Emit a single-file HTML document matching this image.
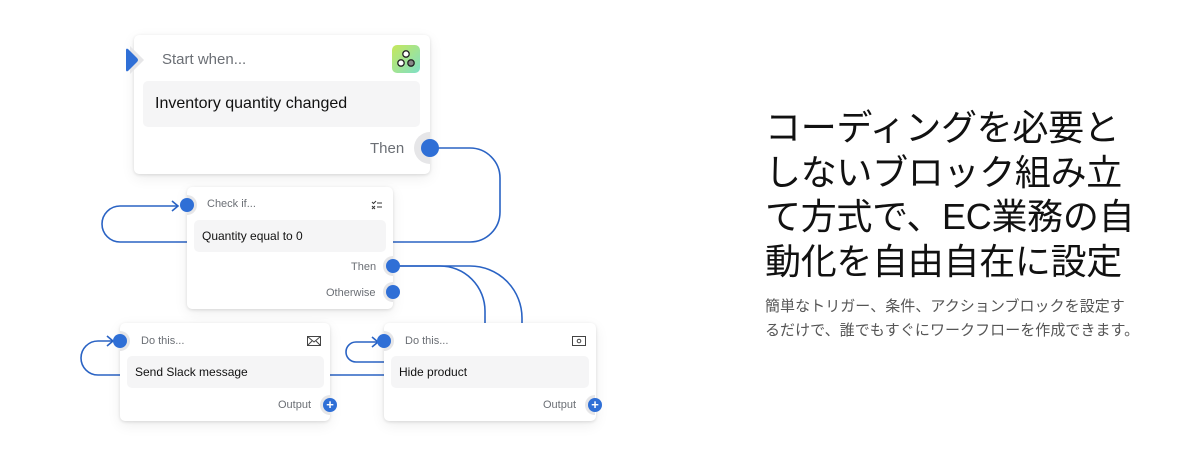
<!DOCTYPE html>
<html><head><meta charset="utf-8"><style>
html,body{margin:0;padding:0;background:#fff;width:1200px;height:474px;overflow:hidden;position:relative;font-family:"Liberation Sans","Noto Sans CJK JP",sans-serif;}
.card{position:absolute;background:#fff;border-radius:5px;box-shadow:0 1px 3px rgba(0,0,0,.12),0 4px 14px rgba(0,0,0,.07);}
.inner{position:absolute;background:#f5f5f6;border-radius:5px;color:#111;}
.lbl{position:absolute;color:#6b6f75;}
.dot{position:absolute;border-radius:50%;background:#2f6fd6;}
.ring{position:absolute;border-radius:50%;background:#e6e6e8;}
h1{position:absolute;left:765px;top:106px;margin:0;font-weight:400;font-size:36px;line-height:44.5px;color:#111;letter-spacing:-0.3px;font-family:"Liberation Sans","Noto Sans CJK JP",sans-serif;white-space:nowrap}
p{position:absolute;left:765px;top:295px;margin:0;font-size:15px;line-height:24px;color:#555;letter-spacing:0.05px;white-space:nowrap}
</style></head><body>
<svg width="1200" height="474" style="position:absolute;left:0;top:0" fill="none" stroke="#2a63c4" stroke-width="1.6">
<path d="M430 148 H470 A30 30 0 0 1 500 178 V212 A30 30 0 0 1 470 242 H393"/>
<path d="M187 242 H120 A18 18 0 0 1 120 206 H178"/><path d="M172 201 L178 206 L172 211"/>
<path d="M393 266 H440 A45 45 0 0 1 485 311 V323"/>
<path d="M393 266 H470 A52 52 0 0 1 522 318 V323"/>
<path d="M120 375 H98 A17 17 0 0 1 98 341 H113"/><path d="M107 336 L113 341 L107 346"/>
<path d="M330 375 H384"/>
<path d="M384 362 H356 A10 10 0 0 1 356 342 H378"/><path d="M372 337 L378 342 L372 347"/>
</svg>
<!-- card1 -->
<div class="card" style="left:134px;top:35px;width:296px;height:139px"></div>
<svg width="24" height="30" style="position:absolute;left:124px;top:45px"><path d="M6 1 L20 15 L6 29 Z" fill="#e6e6e8"/><path d="M2 5 Q2 3 4 4 L13 13 Q15 15 13 17 L4 26 Q2 27 2 25 Z" fill="#2f6fd6"/></svg>
<div class="lbl" style="left:162px;top:51px;font-size:15px">Start when...</div>
<div style="position:absolute;left:392px;top:45px;width:28px;height:28px;border-radius:5px;background:linear-gradient(135deg,#c6e85a,#7fe0c8)"></div>
<svg width="28" height="28" style="position:absolute;left:392px;top:45px" fill="#fff" stroke="#222" stroke-width="1.3"><circle cx="14" cy="9" r="3.2"/><circle cx="9" cy="18" r="3.2"/><circle cx="19" cy="18" r="3.2" fill="#888"/></svg>
<div class="inner" style="left:143px;top:81px;width:277px;height:46px"><span style="position:absolute;left:12px;top:14px;font-size:16px">Inventory quantity changed</span></div>
<div class="lbl" style="left:370px;top:140px;font-size:15px">Then</div>
<div class="ring" style="left:414px;top:132px;width:32px;height:32px;clip-path:inset(0 50% 0 0)"></div>
<div class="dot" style="left:421px;top:139px;width:18px;height:18px"></div>
<!-- card2 -->
<div class="card" style="left:187px;top:187px;width:206px;height:122px"></div>
<div class="ring" style="left:177px;top:195px;width:20px;height:20px;clip-path:inset(0 0 0 50%)"></div>
<div class="dot" style="left:180px;top:198px;width:14px;height:14px"></div>
<div class="lbl" style="left:207px;top:198px;font-size:11px">Check if...</div>
<svg width="12" height="10" style="position:absolute;left:371px;top:200px" fill="none" stroke="#333" stroke-width="1"><path d="M1 2 L2.5 3.5 L5 1 M1 6 L4 9 M4 6 L1 9 M6 3 H11 M6 7 H11"/></svg>
<div class="inner" style="left:194px;top:220px;width:192px;height:32px"><span style="position:absolute;left:8px;top:9px;font-size:12px">Quantity equal to 0</span></div>
<div class="lbl" style="left:351px;top:261px;font-size:11px">Then</div>
<div class="ring" style="left:383px;top:256px;width:20px;height:20px;clip-path:inset(0 50% 0 0)"></div>
<div class="dot" style="left:386px;top:259px;width:14px;height:14px"></div>
<div class="lbl" style="left:326px;top:287px;font-size:11px">Otherwise</div>
<div class="ring" style="left:383px;top:282px;width:20px;height:20px;clip-path:inset(0 50% 0 0)"></div>
<div class="dot" style="left:386px;top:285px;width:14px;height:14px"></div>
<!-- card3 -->
<div class="card" style="left:120px;top:323px;width:210px;height:98px"></div>
<div class="ring" style="left:110px;top:331px;width:20px;height:20px;clip-path:inset(0 0 0 50%)"></div>
<div class="dot" style="left:113px;top:334px;width:14px;height:14px"></div>
<div class="lbl" style="left:141px;top:335px;font-size:11px">Do this...</div>
<svg width="14" height="10" style="position:absolute;left:307px;top:336px" fill="none" stroke="#444" stroke-width="1"><rect x=".5" y=".5" width="13" height="9"/><path d="M.5 .5 L7 6 L13.5 .5 M.5 9.5 L5 5 M13.5 9.5 L9 5"/></svg>
<div class="inner" style="left:127px;top:356px;width:197px;height:32px"><span style="position:absolute;left:8px;top:9px;font-size:12px">Send Slack message</span></div>
<div class="lbl" style="left:278px;top:399px;font-size:11px">Output</div>
<div class="ring" style="left:320px;top:395px;width:20px;height:20px;clip-path:inset(0 50% 0 0)"></div>
<div class="dot" style="left:323px;top:398px;width:14px;height:14px;color:#fff;font-size:13px;line-height:14px;text-align:center;font-weight:bold">+</div>
<!-- card4 -->
<div class="card" style="left:384px;top:323px;width:212px;height:98px"></div>
<div class="ring" style="left:374px;top:331px;width:20px;height:20px;clip-path:inset(0 0 0 50%)"></div>
<div class="dot" style="left:377px;top:334px;width:14px;height:14px"></div>
<div class="lbl" style="left:405px;top:335px;font-size:11px">Do this...</div>
<svg width="14" height="10" style="position:absolute;left:572px;top:336px" fill="none" stroke="#444" stroke-width="1"><rect x=".5" y=".5" width="13" height="9"/><circle cx="7" cy="5" r="1.8"/></svg>
<div class="inner" style="left:391px;top:356px;width:198px;height:32px"><span style="position:absolute;left:8px;top:9px;font-size:12px">Hide product</span></div>
<div class="lbl" style="left:543px;top:399px;font-size:11px">Output</div>
<div class="ring" style="left:585px;top:395px;width:20px;height:20px;clip-path:inset(0 50% 0 0)"></div>
<div class="dot" style="left:588px;top:398px;width:14px;height:14px;color:#fff;font-size:13px;line-height:14px;text-align:center;font-weight:bold">+</div>
<h1>コーディングを必要と<br>しないブロック組み立<br>て方式で、EC業務の自<br>動化を自由自在に設定</h1>
<p>簡単なトリガー、条件、アクションブロックを設定す<br>るだけで、誰でもすぐにワークフローを作成できます。</p>
</body></html>
